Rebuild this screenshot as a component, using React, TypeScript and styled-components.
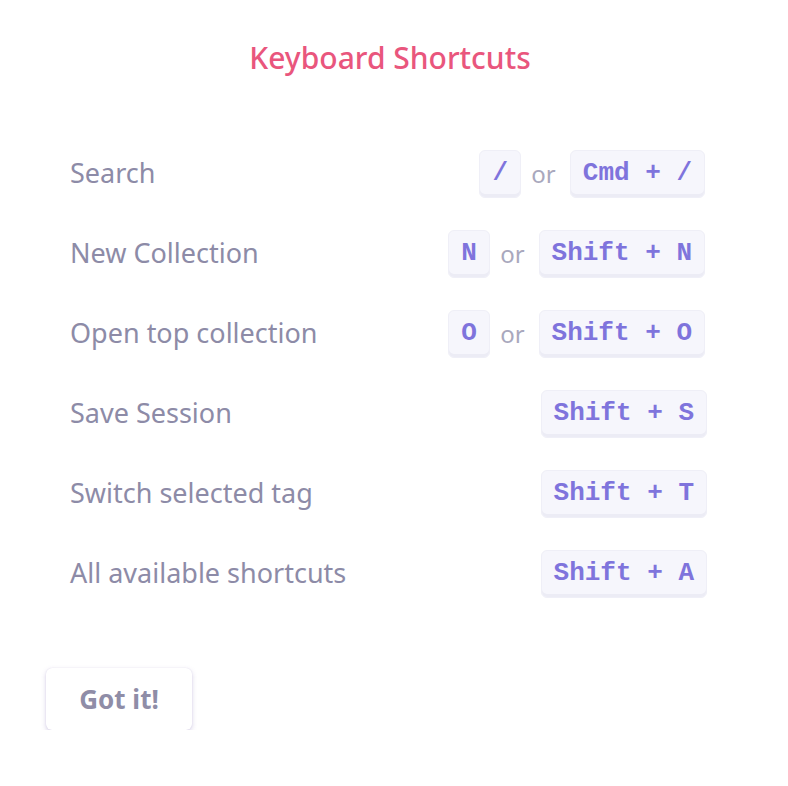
import React from "react";
import styled, { createGlobalStyle } from "styled-components";

const Global = createGlobalStyle`
  html, body { margin: 0; padding: 0; background: #ffffff; }
  body { font-family: "Noto Sans", "Open Sans", sans-serif; }
`;

const Modal = styled.div`
  width: 788px;
  box-sizing: border-box;
  padding: 26px 46px 0 46px;
`;

const Title = styled.h1`
  margin: 0;
  text-align: center;
  font-family: "Noto Sans", sans-serif;
  font-size: 30px;
  font-weight: 500;
  color: #e9567d;
  line-height: 64px;
  padding-right: 8px;
`;

const List = styled.div`
  display: flex;
  flex-direction: column;
  padding: 44px 37px 0 24px;
`;

const Row = styled.div<{ $solo?: boolean }>`
  height: 80px;
  display: flex;
  align-items: center;
  justify-content: space-between;
  margin-right: ${(p) => (p.$solo ? "-2px" : "0")};
`;

const Label = styled.span`
  font-size: 27px;
  color: #8d8ba7;
  margin-top: -4px;
`;

const Keys = styled.div`
  display: flex;
  align-items: center;
  gap: 10px;
`;

const Kbd = styled.kbd`
  display: inline-flex;
  align-items: center;
  justify-content: center;
  box-sizing: border-box;
  height: 48px;
  min-width: 42px;
  padding: 0 12px 3px;
  background: #f6f6fc;
  border: 1px solid #efeff7;
  border-radius: 6px;
  box-shadow: inset 0 -3px 0 #ececf5;
  font-family: "Liberation Mono", "Courier New", monospace;
  font-weight: 700;
  font-size: 26px;
  color: #7f74dc;
  white-space: pre;
`;

const Or = styled.span`
  font-size: 24px;
  color: #a9a8bd;
  margin: -2px 4px 0 0;
`;

const Button = styled.button`
  margin-top: 54px;
  width: 146px;
  height: 62px;
  background: #ffffff;
  border: none;
  border-radius: 6px;
  box-shadow: 0 2px 5px rgba(110, 90, 170, 0.28), 0 0 1px rgba(110, 90, 170, 0.2);
  font-family: "Noto Sans", sans-serif;
  font-weight: 700;
  font-size: 26px;
  color: #8f8da7;
  cursor: pointer;
`;

type Shortcut = { label: string; keys: string[] };

const shortcuts: Shortcut[] = [
  { label: "Search", keys: ["/", "Cmd + /"] },
  { label: "New Collection", keys: ["N", "Shift + N"] },
  { label: "Open top collection", keys: ["O", "Shift + O"] },
  { label: "Save Session", keys: ["Shift + S"] },
  { label: "Switch selected tag", keys: ["Shift + T"] },
  { label: "All available shortcuts", keys: ["Shift + A"] },
];

export default function App() {
  return (
    <>
      <Global />
      <Modal>
        <Title>Keyboard Shortcuts</Title>
        <List>
          {shortcuts.map((s) => (
            <Row key={s.label} $solo={s.keys.length === 1}>
              <Label>{s.label}</Label>
              <Keys>
                {s.keys.map((k, i) => (
                  <React.Fragment key={k}>
                    {i > 0 && <Or>or</Or>}
                    <Kbd>{k}</Kbd>
                  </React.Fragment>
                ))}
              </Keys>
            </Row>
          ))}
        </List>
        <Button>Got it!</Button>
      </Modal>
    </>
  );
}
